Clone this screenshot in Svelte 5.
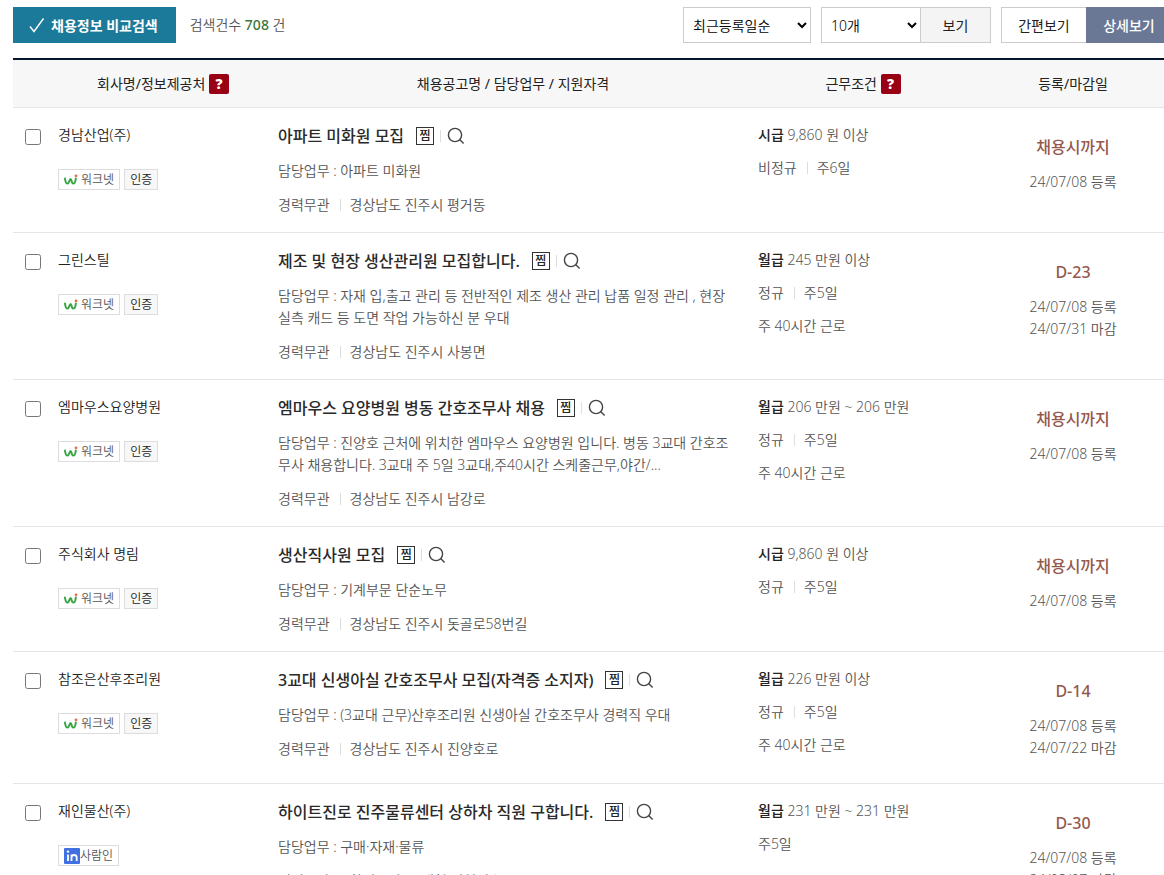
<script>
	const sortOptions = ['최근등록일순', '마감일순', '임금높은순'];
	const pageSizes = [10, 20, 30, 50];

	let sort = $state('최근등록일순');
	let size = $state(10);
	let selected = $state([]);

	const total = 708;

	const jobs = [
		{
			id: 1,
			company: '경남산업(주)',
			source: 'worknet',
			title: '아파트 미화원 모집',
			duty: '아파트 미화원',
			meta: ['경력무관', '경상남도 진주시 평거동'],
			payType: '시급',
			pay: '9,860 원 이상',
			terms: [['비정규', '주6일']],
			due: '채용시까지',
			dates: ['24/07/08 등록']
		},
		{
			id: 2,
			company: '그린스틸',
			source: 'worknet',
			title: '제조 및 현장 생산관리원 모집합니다.',
			duty: '자재 입,출고 관리 등 전반적인 제조 생산 관리 납품 일정 관리 , 현장 실측 캐드 등 도면 작업 가능하신 분 우대',
			meta: ['경력무관', '경상남도 진주시 사봉면'],
			payType: '월급',
			pay: '245 만원 이상',
			terms: [['정규', '주5일'], ['주 40시간 근로']],
			due: 'D-23',
			dates: ['24/07/08 등록', '24/07/31 마감']
		},
		{
			id: 3,
			company: '엠마우스요양병원',
			source: 'worknet',
			title: '엠마우스 요양병원 병동 간호조무사 채용',
			duty: '진양호 근처에 위치한 엠마우스 요양병원 입니다. 병동 3교대 간호조무사 채용합니다. 3교대 주 5일 3교대,주40시간 스케줄근무,야간/...',
			meta: ['경력무관', '경상남도 진주시 남강로'],
			payType: '월급',
			pay: '206 만원 ~ 206 만원',
			terms: [['정규', '주5일'], ['주 40시간 근로']],
			due: '채용시까지',
			dates: ['24/07/08 등록']
		},
		{
			id: 4,
			company: '주식회사 명림',
			source: 'worknet',
			title: '생산직사원 모집',
			duty: '기계부문 단순노무',
			meta: ['경력무관', '경상남도 진주시 돗골로58번길'],
			payType: '시급',
			pay: '9,860 원 이상',
			terms: [['정규', '주5일']],
			due: '채용시까지',
			dates: ['24/07/08 등록']
		},
		{
			id: 5,
			company: '참조은산후조리원',
			source: 'worknet',
			title: '3교대 신생아실 간호조무사 모집(자격증 소지자)',
			duty: '(3교대 근무)산후조리원 신생아실 간호조무사 경력직 우대',
			meta: ['경력무관', '경상남도 진주시 진양호로'],
			payType: '월급',
			pay: '226 만원 이상',
			terms: [['정규', '주5일'], ['주 40시간 근로']],
			due: 'D-14',
			dates: ['24/07/08 등록', '24/07/22 마감']
		},
		{
			id: 6,
			company: '재인물산(주)',
			source: 'saramin',
			title: '하이트진로 진주물류센터 상하차 직원 구합니다.',
			duty: '구매·자재·물류',
			meta: ['경력무관', '학력무관', '대형 면허필수'],
			payType: '월급',
			pay: '231 만원 ~ 231 만원',
			terms: [['주5일']],
			due: 'D-30',
			dates: ['24/07/08 등록', '24/08/07 마감']
		}
	];
</script>

<div class="page">
	<div class="toolbar">
		<button type="button" class="compare">
			<svg width="16" height="16" viewBox="0 0 16 16" fill="none" stroke="#fff" stroke-width="1.4"><path d="M1 9.5 5 14.5 14.5 1.5" /></svg>
			채용정보 비교검색
		</button>
		<p class="count">검색건수 <strong>{total}</strong> 건</p>

		<div class="controls">
			<select class="sort" bind:value={sort} aria-label="정렬 순서">
				{#each sortOptions as o}
					<option value={o}>{o}</option>
				{/each}
			</select>
			<div class="group">
				<select class="size" bind:value={size} aria-label="목록 개수">
					{#each pageSizes as n}
						<option value={n}>{n}개</option>
					{/each}
				</select>
				<button type="button" class="apply">보기</button>
			</div>
			<div class="group">
				<button type="button" class="view">간편보기</button>
				<button type="button" class="view active">상세보기</button>
			</div>
		</div>
	</div>

	<table>
		<colgroup>
			<col class="c-check" />
			<col class="c-company" />
			<col />
			<col class="c-terms" />
			<col class="c-date" />
		</colgroup>
		<thead>
			<tr>
				<th></th>
				<th>회사명/정보제공처 <button type="button" class="help" aria-label="정보제공처 도움말">?</button></th>
				<th>채용공고명 / 담당업무 / 지원자격</th>
				<th>근무조건 <button type="button" class="help" aria-label="근무조건 도움말">?</button></th>
				<th>등록/마감일</th>
			</tr>
		</thead>
		<tbody>
			{#each jobs as job (job.id)}
				<tr>
					<td class="check">
						<input type="checkbox" value={job.id} bind:group={selected} aria-label={job.company + ' 선택'} />
					</td>
					<td class="company">
						<a href="#company">{job.company}</a>
						<div class="badges">
							{#if job.source === 'worknet'}
								<span class="badge">
									<svg width="14" height="12" viewBox="0 0 14 12" fill="none"><path d="M1 4.5C1.3 7.5 2.2 9.6 3.6 9.6 5.2 9.6 5.4 5 6.6 5c1 0 .9 4.6 2.6 4.6 1.6 0 2.4-2.4 2.6-5.1" stroke="#38a544" stroke-width="2" stroke-linecap="round" /><circle cx="12" cy="1.8" r="1.4" fill="#ee6a3b" /></svg>
									<span>워크넷</span>
								</span>
								<span class="badge cert">인증</span>
							{:else}
								<span class="badge tight">
									<svg width="16" height="16" viewBox="0 0 16 16" fill="none"><rect width="16" height="16" rx="1" fill="#4171e0" /><path d="M4 6.5V13M7.5 13V6.5M7.5 9.5C7.5 7.5 8.6 7 10 7s2.7.6 2.7 2.5V13" stroke="#fff" stroke-width="1.8" /><circle cx="4" cy="3.6" r="1.2" fill="#fff" /></svg>
									<span>사람인</span>
								</span>
							{/if}
						</div>
					</td>
					<td class="job">
						<div class="title">
							<a href="#job">{job.title}</a>
							<button type="button" class="pick">찜</button>
							<button type="button" class="search" aria-label="미리보기">
								<svg width="18" height="18" viewBox="0 0 18 18" fill="none" stroke="#444" stroke-width="1.4"><circle cx="8" cy="8" r="6.6" /><path d="m12.6 12.6 4 4" /></svg>
							</button>
						</div>
						<p class="duty">담당업무 : {job.duty}</p>
						<p class="parts">
							{#each job.meta as m}<span>{m}</span>{/each}
						</p>
					</td>
					<td class="terms">
						<p><strong>{job.payType}</strong> {job.pay}</p>
						{#each job.terms as line}
							<p class="parts">
								{#each line as t}<span>{t}</span>{/each}
							</p>
						{/each}
					</td>
					<td class="date">
						<strong>{job.due}</strong>
						{#each job.dates as d}
							<p>{d}</p>
						{/each}
					</td>
				</tr>
			{/each}
		</tbody>
	</table>
</div>

<style>
	:global(body) {
		background: #fff;
	}

	.page {
		padding: 7px 0 0 13px;
		overflow: hidden;
		font-family: 'Noto Sans', 'Noto Sans CJK KR', sans-serif;
		font-size: 14px;
		font-weight: 350;
		line-height: 22px;
		color: #555;
	}

	p { margin: 0; }
	a { color: inherit; text-decoration: none; }

	button,
	select {
		box-sizing: border-box;
		margin: 0;
		font-family: inherit;
		font-size: 14px;
		border-radius: 0;
		cursor: pointer;
	}

	/* toolbar */
	.toolbar {
		display: flex;
		align-items: center;
		height: 36px;
		margin: 0 -8px 15px 0;
	}

	.compare {
		display: flex;
		align-items: center;
		gap: 6px;
		height: 36px;
		padding: 0 18px 0 16px;
		border: 0;
		background: #1b7a99;
		color: #fff;
		font-weight: 600;
		white-space: nowrap;
	}

	.count { margin-left: 14px; white-space: nowrap; }
	.count strong { color: #3c763d; font-weight: 500; }

	.controls {
		display: flex;
		gap: 10px;
		margin-left: auto;
	}

	.group { display: flex; }

	select {
		height: 36px;
		padding: 0 0 0 5px;
		border: 1px solid #ccc;
		background: #fff;
		color: #000;
		font-weight: 350;
	}
	.sort { width: 128px; }
	.size { width: 100px; }

	.apply,
	.view {
		height: 36px;
		padding: 0;
		border: 1px solid #ccc;
		color: #222;
		font-weight: 400;
	}
	.apply { width: 71px; margin-left: -1px; background: #f4f4f4; }
	.view { width: 86px; background: #fff; }
	.view.active {
		margin-left: -1px;
		border-color: #6a7896;
		background: #6a7896;
		color: #fff;
		font-weight: 500;
	}

	/* list */
	table {
		width: calc(100% + 4px);
		table-layout: fixed;
		border-collapse: separate;
		border-spacing: 0;
		border-top: 2px solid #04152f;
	}

	.c-check { width: 45px; }
	.c-company { width: 210px; }
	.c-terms { width: 230px; }
	.c-date { width: 190px; }

	th {
		height: 47px;
		padding: 0;
		border-bottom: 1px solid #e5e5e5;
		background: #f7f7f7;
		color: #222;
		font-weight: 400;
	}
	th:nth-child(3) { padding-left: 10px; }

	.help {
		width: 20px;
		height: 20px;
		padding: 0;
		border: 0;
		border-radius: 2px;
		background: #990014;
		color: #fff;
		font-weight: 900;
		line-height: 20px;
	}

	td {
		padding: 16px 0;
		border-bottom: 1px solid #e5e5e5;
		vertical-align: top;
	}

	.check input {
		display: block;
		width: 16px;
		height: 16px;
		margin: 5px 0 0 12px;
	}

	.company { color: #222; }

	.badges {
		display: flex;
		gap: 4px;
		margin-top: 23px;
	}

	.badge {
		display: flex;
		align-items: center;
		gap: 3px;
		height: 19px;
		padding: 0 5px;
		border: 1px solid #ddd;
		font-size: 12px;
		line-height: 19px;
		color: #555;
	}
	.badge.tight { gap: 0; }
	.badge.cert { background: #f7f7f7; color: #222; }

	.job { padding: 17px 12px 16px 10px; }

	.title {
		display: flex;
		align-items: center;
		height: 22px;
		margin-bottom: 13px;
		font-size: 16px;
		font-weight: 500;
		color: #2a2a2a;
	}

	.pick {
		width: 18px;
		height: 18px;
		margin-left: 12px;
		padding: 0;
		border: 1px solid #333;
		background: #fff;
		color: #222;
		font-size: 12px;
		font-weight: 500;
		line-height: 14px;
	}

	.search {
		display: flex;
		align-items: center;
		height: 12px;
		margin-left: 6px;
		padding: 0 0 0 6px;
		border: 0;
		border-left: 1px solid #ddd;
		background: none;
	}
	.search svg { flex: none; }

	.duty { margin-bottom: 12px; }

	.parts {
		display: flex;
		align-items: center;
	}
	.parts span + span {
		display: flex;
		align-items: center;
	}
	.parts span + span::before {
		content: '';
		height: 12px;
		margin: 0 9px 0 10px;
		border-left: 1px solid #ddd;
	}

	.terms { padding-left: 10px; }
	.terms p + p { margin-top: 11px; }
	.terms strong { color: #222; font-weight: 500; }

	.date {
		padding: 28px 0 24px;
		text-align: center;
	}
	.date strong {
		display: block;
		margin-bottom: 13px;
		color: #95584c;
		font-size: 16px;
		font-weight: 500;
	}
</style>
